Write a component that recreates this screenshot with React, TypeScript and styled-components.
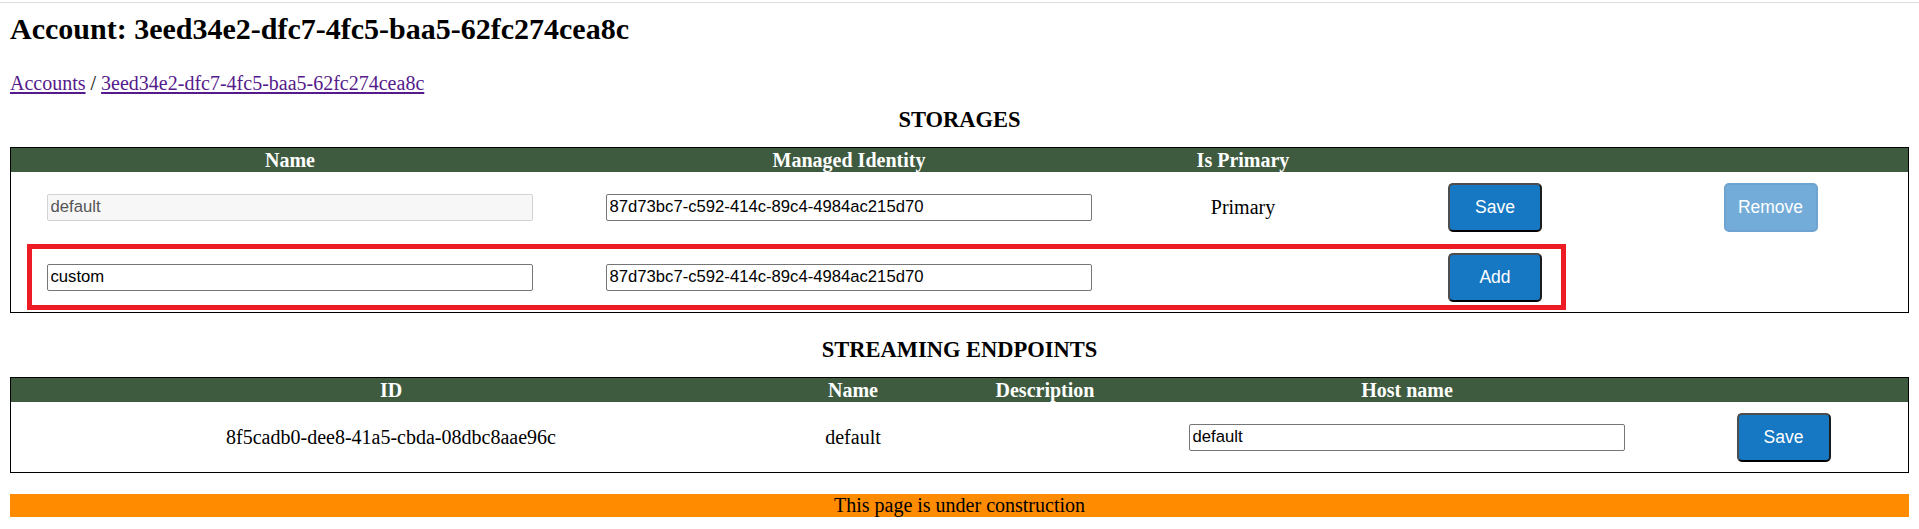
import React from 'react'
import styled, { createGlobalStyle } from 'styled-components'

const STORAGE_COLS = '558px 560px 228px 276px 1fr'
const ENDPOINT_COLS = '760px 164px 220px 504px 1fr'

const GlobalStyle = createGlobalStyle`
  html, body {
    margin: 0;
    padding: 0;
    background: #fff;
  }
  body {
    font-family: 'Liberation Serif', 'Times New Roman', serif;
    font-size: 20px;
    color: #000;
  }
`

const TopRule = styled.div`
  height: 1px;
  margin-top: 2px;
  background: #dedede;
`

const Page = styled.div`
  padding: 0 10px;
`

const Title = styled.h2`
  margin: 9px 0 26px;
  font-size: 30px;
  line-height: 34px;
  font-weight: bold;
`

const Crumbs = styled.nav`
  line-height: 23px;
  a {
    color: #551a8b;
    text-decoration: underline;
    text-decoration-thickness: 2px;
    text-underline-offset: 2px;
  }
`

const Section = styled.section`
  margin-top: 24px;
  &:first-of-type {
    margin-top: 12px;
  }
`

const SectionTitle = styled.h3`
  margin: 0 0 14px;
  font-size: 22.5px;
  line-height: 26px;
  font-weight: bold;
  text-align: center;
`

const Grid = styled.div`
  border: 1px solid #000;
`

const HeadRow = styled.div<{ $cols: string }>`
  display: grid;
  grid-template-columns: ${(p) => p.$cols};
  height: 24px;
  line-height: 24px;
  background: #3e5b3f;
  color: #fff;
  font-weight: bold;
  text-align: center;
`

const Row = styled.div<{ $cols: string }>`
  position: relative;
  display: grid;
  grid-template-columns: ${(p) => p.$cols};
  height: 70px;
  align-items: center;
  justify-items: center;
`

const Cell = styled.div`
  text-align: center;
`

const Highlight = styled.div`
  position: absolute;
  left: 16px;
  top: 2px;
  bottom: 2px;
  width: 1539px;
  box-sizing: border-box;
  border: 5px solid #ed1c24;
  pointer-events: none;
`

const Field = styled.input<{ $w: number }>`
  box-sizing: border-box;
  width: ${(p) => p.$w}px;
  height: 27px;
  padding: 1px 2.5px;
  border: 1px solid #767676;
  border-radius: 2px;
  background: #fff;
  color: #000;
  font-family: 'Liberation Sans', Arial, sans-serif;
  font-size: 16.67px;
  outline: none;

  &:read-only {
    background: #f7f7f7;
    border-color: #d3d3d3;
    color: #555;
  }
`

const Button = styled.button`
  box-sizing: border-box;
  width: 94px;
  height: 49px;
  border: 2px solid;
  border-color: #4d4d4d #1c1c1c #000 #4d4d4d;
  border-radius: 5px;
  background: #1677c2;
  color: #fff;
  font-family: 'Liberation Sans', Arial, sans-serif;
  font-size: 17.5px;
  cursor: pointer;

  &:disabled {
    background: #73acd8;
    border-color: #6fa3cf;
    cursor: default;
  }
`

const Notice = styled.div`
  margin-top: 21px;
  height: 23px;
  line-height: 23px;
  background: #ff8c00;
  text-align: center;
`

const storages = [
  { name: 'default', identity: '87d73bc7-c592-414c-89c4-4984ac215d70', primary: true },
]

const endpoints = [
  { id: '8f5cadb0-dee8-41a5-cbda-08dbc8aae96c', name: 'default', description: '', host: 'default' },
]

function App() {
  const accountId = '3eed34e2-dfc7-4fc5-baa5-62fc274cea8c'

  return (
    <>
      <GlobalStyle />
      <TopRule />
      <Page>
        <Title>Account: {accountId}</Title>
        <Crumbs>
          <a href="#">Accounts</a> / <a href="#">{accountId}</a>
        </Crumbs>

        <Section>
          <SectionTitle>STORAGES</SectionTitle>
          <Grid>
            <HeadRow $cols={STORAGE_COLS}>
              <div>Name</div>
              <div>Managed Identity</div>
              <div>Is Primary</div>
              <div />
              <div />
            </HeadRow>
            {storages.map((s) => (
              <Row key={s.name} $cols={STORAGE_COLS}>
                <Field $w={486} value={s.name} readOnly />
                <Field $w={486} defaultValue={s.identity} />
                <Cell>{s.primary ? 'Primary' : ''}</Cell>
                <Button>Save</Button>
                <Button disabled={s.primary}>Remove</Button>
              </Row>
            ))}
            <Row $cols={STORAGE_COLS}>
              <Field $w={486} defaultValue="custom" />
              <Field $w={486} defaultValue="87d73bc7-c592-414c-89c4-4984ac215d70" />
              <Cell />
              <Button>Add</Button>
              <Cell />
              <Highlight />
            </Row>
          </Grid>
        </Section>

        <Section>
          <SectionTitle>STREAMING ENDPOINTS</SectionTitle>
          <Grid>
            <HeadRow $cols={ENDPOINT_COLS}>
              <div>ID</div>
              <div>Name</div>
              <div>Description</div>
              <div>Host name</div>
              <div />
            </HeadRow>
            {endpoints.map((e) => (
              <Row key={e.id} $cols={ENDPOINT_COLS}>
                <Cell>{e.id}</Cell>
                <Cell>{e.name}</Cell>
                <Cell>{e.description}</Cell>
                <Field $w={436} defaultValue={e.host} />
                <Button>Save</Button>
              </Row>
            ))}
          </Grid>
        </Section>

        <Notice>This page is under construction</Notice>
      </Page>
    </>
  )
}

export default App
